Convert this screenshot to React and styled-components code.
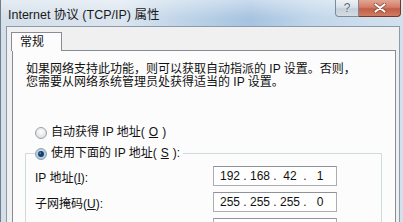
import styled, { createGlobalStyle } from "styled-components";

const GlobalStyle = createGlobalStyle`
  html, body { margin: 0; padding: 0; background: #fff; overflow: hidden; }
  body { font-family: "Liberation Sans", "Noto Sans CJK SC", sans-serif; color: #111; }
`;

const Window = styled.div`
  width: 403px;
  height: 222px;
  overflow: hidden;
  box-sizing: border-box;
  display: grid;
  grid-template-rows: 26px 1fr;
  grid-template-columns: minmax(0, 1fr);
  border-left: 1px solid #6f7d8c;
  background: linear-gradient(90deg, #d4dfea 0%, #dbe5ef 30%, #bfd4e8 45%, #a6c3e0 62%, #c2d7eb 78%, #d3e1ee 100%);
`;

const TitleBar = styled.div`
  display: grid;
  grid-template-columns: minmax(0, 1fr) auto;
  align-items: start;
  padding-left: 7px;
  background: linear-gradient(180deg, rgba(255, 255, 255, 0.4), rgba(255, 255, 255, 0) 70%);
`;

const Title = styled.span`
  margin-top: 8px;
  font-size: 12.5px;
  line-height: 14px;
  color: #1a1a1a;
  white-space: nowrap;
`;

const CaptionButtons = styled.div`
  display: flex;
  margin-right: 2px;
`;

const CaptionButton = styled.div`
  height: 17px;
  width: ${(p) => (p.$close ? 42 : 24)}px;
  box-sizing: border-box;
  display: flex;
  align-items: center;
  justify-content: center;
  border: 1px solid ${(p) => (p.$close ? "#7a3528" : "#7f8a97")};
  border-top: none;
  border-left-width: ${(p) => (p.$close ? 0 : 1)}px;
  border-radius: ${(p) => (p.$close ? "0 0 4px 0" : "0 0 0 4px")};
  background: ${(p) =>
    p.$close
      ? "linear-gradient(180deg, #e2a595 0%, #d27e68 45%, #c25d46 55%, #cf7d64 100%)"
      : "linear-gradient(180deg, #eef2f6 0%, #d8e0e8 45%, #c5cfd9 55%, #d3dce5 100%)"};
  font-size: 12px;
  color: #5b6876;
  text-shadow: 0 0 2px #fff;
`;

const Body = styled.div`
  min-width: 0;
  margin: 0 3px 0 5px;
  padding: 5px 3px 0 4px;
  display: flex;
  flex-direction: column;
  border: 1px solid #8d9aa9;
  border-bottom: none;
  background: #f0f0f0;
`;

const Tabs = styled.div`
  display: flex;
  position: relative;
  z-index: 1;
  margin-bottom: -1px;
`;

const Tab = styled.div`
  width: 51px;
  height: 19px;
  box-sizing: border-box;
  padding: 1px 0 0 8px;
  border: 1px solid #898c95;
  border-bottom: none;
  background: #fcfcfc;
  font-size: 12px;
  line-height: 16px;
`;

const Pane = styled.div`
  flex: 1;
  min-width: 0;
  margin-left: 1px;
  padding: 12px 0 0 12px;
  border: 1px solid #898c95;
  border-bottom: none;
  background: #fcfcfc;
`;

const Intro = styled.p`
  margin: 0 0 0 1px;
  font-size: 12px;
  line-height: 13px;
  white-space: nowrap;
`;

const RadioRow = styled.label`
  display: flex;
  align-items: center;
  gap: 4px;
  height: 13px;
  font-size: 12px;
  line-height: 13px;
  white-space: nowrap;
  margin: ${(p) => p.$margin || "0"};
`;

const GroupBox = styled.fieldset`
  margin: 8px 13px 0 0;
  padding: 6px 0 0 9px;
  border: 1px solid #d0dae1;
  border-bottom: none;
  min-width: 0;
`;

const Legend = styled.legend`
  padding: 0 3px 0 0;
`;

const FieldRow = styled.div`
  display: grid;
  grid-template-columns: 178px 124px;
  align-items: center;
  margin-bottom: 6px;
  font-size: 12px;
`;

const IpBox = styled.div`
  height: 20px;
  box-sizing: border-box;
  display: flex;
  align-items: center;
  padding-left: 4px;
  border: 1px solid #abadb3;
  border-top-color: #8e939b;
  background: #fff;
  font-size: 12px;
`;

const Octet = styled.span`
  width: 24px;
  text-align: center;
`;

const Dot = styled.span`
  width: 6px;
  text-align: center;
`;

const Radio = ({ checked }) => (
  <svg width="12" height="12" viewBox="0 0 12 12">
    <defs>
      <radialGradient id={checked ? "rg-on" : "rg-off"} cx="50%" cy="40%" r="60%">
        <stop offset="0%" stopColor={checked ? "#cfe6f7" : "#ffffff"} />
        <stop offset="100%" stopColor={checked ? "#9fc2dc" : "#dcdcdc"} />
      </radialGradient>
    </defs>
    <circle cx="6" cy="6" r="5.5" fill={`url(#${checked ? "rg-on" : "rg-off"})`} stroke="#98a2ac" />
    {checked && <circle cx="6" cy="6" r="3" fill="#1c3c66" />}
    {checked && <circle cx="5.3" cy="5.2" r="1" fill="#5d86b6" />}
  </svg>
);

const IpValue = ({ parts }) => (
  <IpBox>
    {parts.map((p, i) => (
      <span key={i} style={{ display: "contents" }}>
        <Octet>{p}</Octet>
        {i < 3 && <Dot>.</Dot>}
      </span>
    ))}
  </IpBox>
);

const Mn = ({ k }) => (
  <>
    (<u>{k}</u>)
  </>
);

export default function App() {
  return (
    <>
      <GlobalStyle />
      <Window>
        <TitleBar>
          <Title>Internet 协议 (TCP/IP) 属性</Title>
          <CaptionButtons>
            <CaptionButton>?</CaptionButton>
            <CaptionButton $close>
              <svg width="14" height="10" viewBox="0 0 14 10">
                <path d="M2.5 1.5 L11.5 8.5 M11.5 1.5 L2.5 8.5" stroke="#7a3a2c" strokeWidth="3.4" strokeLinecap="round" />
                <path d="M2.5 1.5 L11.5 8.5 M11.5 1.5 L2.5 8.5" stroke="#fff" strokeWidth="2.2" strokeLinecap="round" />
              </svg>
            </CaptionButton>
          </CaptionButtons>
        </TitleBar>
        <Body>
          <Tabs>
            <Tab>常规</Tab>
          </Tabs>
          <Pane>
            <Intro>
              如果网络支持此功能，则可以获取自动指派的 IP 设置。否则，
              <br />
              您需要从网络系统管理员处获得适当的 IP 设置。
            </Intro>
            <RadioRow $margin="37px 0 0 10px">
              <Radio />
              自动获得 IP 地址<Mn k="O" />
            </RadioRow>
            <GroupBox>
              <Legend>
                <RadioRow>
                  <Radio checked />
                  使用下面的 IP 地址<Mn k="S" />:
                </RadioRow>
              </Legend>
              <FieldRow>
                <span>
                  IP 地址<Mn k="I" />:
                </span>
                <IpValue parts={["192", "168", "42", "1"]} />
              </FieldRow>
              <FieldRow>
                <span>
                  子网掩码<Mn k="U" />:
                </span>
                <IpValue parts={["255", "255", "255", "0"]} />
              </FieldRow>
              <FieldRow>
                <span>
                  默认网关<Mn k="D" />:
                </span>
                <IpBox />
              </FieldRow>
            </GroupBox>
          </Pane>
        </Body>
      </Window>
    </>
  );
}
